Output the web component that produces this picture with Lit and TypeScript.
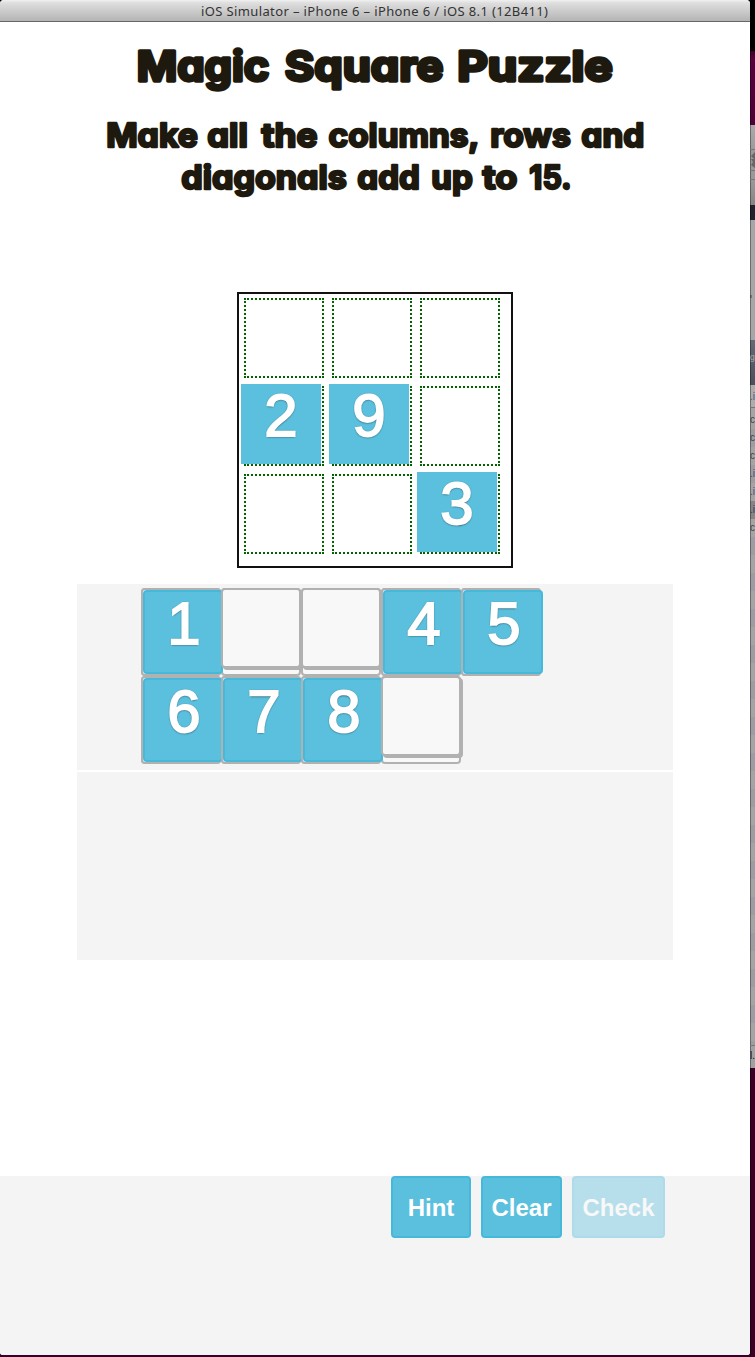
import { LitElement, html, svg, css, nothing } from "lit";
import { customElement, property } from "lit/decorators.js";

type Word = [text: string, x: number, width: number];
interface Line { y: number; cls: string; words: Word[]; }

const HEADINGS: Line[] = [
  { y: 59, cls: "title", words: [["Magic", 136.7, 132.6], ["Square", 284.7, 158.6], ["Puzzle", 457.2, 155.4]] },
  { y: 124.8, cls: "sub", words: [["Make", 106.2, 91.6], ["all", 207.3, 40.5], ["the", 261.5, 56], ["columns,", 328.5, 151], ["rows", 490.3, 80.5], ["and", 581.3, 63]] },
  { y: 166.8, cls: "sub", words: [["diagonals", 181.3, 165.5], ["add", 357.3, 62.5], ["up", 431.3, 41.5], ["to", 482.5, 35], ["15.", 529.3, 42]] },
];

const BOARD = ["", "", "", "2", "9", "", "", "", "3"];
const TRAY = ["1", "", "", "4", "5", "6", "7", "8", ""];

@customElement("number-tile")
class NumberTile extends LitElement {
  @property() value = "";
  static styles = css`
    :host {
      display: block;
      box-sizing: border-box;
      flex: none;
      background: #5bc0de;
      color: #fff;
      text-align: center;
      font: 60px/64px "Liberation Sans", Arial, sans-serif;
      -webkit-text-stroke: 1.8px #fff;
      text-shadow: 0 0 2px rgba(0, 0, 0, 0.7), 0 1px 2px rgba(0, 0, 0, 0.6);
    }
  `;
  render() {
    return html`${this.value}`;
  }
}

@customElement("desktop-edge")
class DesktopEdge extends LitElement {
  static styles = css`
    :host {
      display: flex;
      flex-direction: column;
      width: 5px;
      height: 1357px;
      overflow: hidden;
      background: #3b0028;
      box-shadow: inset 1px 0 0 rgba(0, 0, 0, 0.4);
      font: 10px/18px "Liberation Sans", Arial, sans-serif;
      color: #444;
    }
    div { flex: none; overflow: hidden; box-sizing: border-box; box-shadow: inset 1px 0 0 rgba(0, 0, 0, 0.35); }
    .sky { height: 51px; background: #000; }
    .wall { height: 74px; background: linear-gradient(#3f002c, #57013e 8px, #4d0138); }
    .bar { height: 24px; background: linear-gradient(#aaa, #9b9b9b); }
    .tools { height: 21px; background: #999; border-top: 1px solid #777; }
    .tools svg { display: block; }
    .rule { height: 9px; background: #999; border-top: 1px solid #777; }
    .low { height: 26px; background: linear-gradient(#999, #858585); border-top: 1px solid #777; }
    .dark { height: 15px; background: #20222f; }
    .pane { height: 120px; background: #a5a7a6; padding-top: 75px; }
    .speck { height: 3px; width: 2px; background: #777; }
    .slate { height: 45px; background: linear-gradient(#656a77, #4b4f5c); color: #aaa; font-size: 8.5px; line-height: 34px; }
    .head { height: 22px; background: #abadad; color: #345c78; font-size: 10px; line-height: 24px; }
    .row { height: 18px; background: #a3a5a5; }
    .row:nth-child(even) { background: #9b9da2; }
    .row.selected { background: #858585; color: #223c60; }
    .blue { color: #375270; }
    .first { height: 22px; border-top: 1px solid #777; padding-top: 3px; }
    .tail { height: 4px; }
    .status { height: 23px; background: #a0a2a2; border-top: 1px solid #777; color: #111; line-height: 20px; }
  `;
  render() {
    const letters = ["c", "c", "c", ".i", ".i", ".i", "c"];
    return html`
      <div class="sky"></div>
      <div class="wall"></div>
      <div class="bar"></div>
      <div class="tools"><svg width="5" height="20"><path d="M5 2L1 6l4 4zM1 9l2 3-2 3 4 3V9z" fill="#666" /></svg></div>
      <div class="rule"></div>
      <div class="low"></div>
      <div class="dark"></div>
      <div class="pane"><div class="speck"></div></div>
      <div class="slate">g</div>
      <div class="head">.i</div>
      ${Array.from({ length: 35 }, (_, i) => html`<div
        class="row ${i === 0 ? "first" : ""} ${i === 5 ? "selected" : ""} ${i > 2 && i < 6 ? "blue" : ""}"
      >${letters[i] ?? nothing}</div>`)}
      <div class="row tail"></div>
      <div class="status">l.</div>
    `;
  }
}

@customElement("app-root")
class AppRoot extends LitElement {
  static styles = css`
    :host {
      display: flex;
      width: 755px;
      height: 1357px;
      overflow: hidden;
      background: linear-gradient(#000 0 51px, #3b0028 51px);
    }
    .window {
      width: 750px;
      height: 1355px;
      flex: none;
      display: flex;
      flex-direction: column;
      align-items: center;
      background: #fff;
      border-radius: 4px 4px 3px 3px;
      overflow: hidden;
    }
    .bar {
      flex: none;
      box-sizing: border-box;
      width: 750px;
      height: 22px;
      border-bottom: 1px solid #676767;
      background: linear-gradient(#f0f0f0, #dedede 3px, #b4b4b4);
    }
    .bar svg, .heading { display: block; }
    .bar text { font: 13px "Noto Sans", sans-serif; fill: #333; }
    .heading { flex: none; height: 270px; width: 750px; }
    .heading text {
      font-family: Inter, sans-serif;
      font-weight: 650;
      font-feature-settings: "cv11" 1;
      fill: #1e190e;
      stroke: #1e190e;
      stroke-linejoin: round;
    }
    .heading .title { font-size: 41px; stroke-width: 3.3px; }
    .heading .sub { font-size: 33px; stroke-width: 2.4px; }
    .board {
      flex: none;
      box-sizing: border-box;
      width: 276px;
      height: 276px;
      border: 2px solid #111;
      padding: 4px 0 0 5px;
      display: grid;
      grid-template: repeat(3, 80px) / repeat(3, 80px);
      gap: 8px;
    }
    .cell { box-sizing: border-box; width: 80px; height: 80px; border: 2px dotted #006400; }
    .cell number-tile { width: 80px; height: 80px; margin: -4px 0 0 -5px; }
    .tray {
      flex: none;
      box-sizing: border-box;
      width: 596px;
      height: 186px;
      margin-top: 16px;
      padding: 4px 0 0 64px;
      background: #f4f4f4;
      display: grid;
    }
    .layer { grid-area: 1 / 1; display: grid; grid-template: repeat(2, 88px) / repeat(5, 80px); }
    .slot, .holder, .empty {
      box-sizing: border-box;
      width: 80px;
      height: 88px;
      border: 2px solid #b1b1b1;
      border-radius: 4px;
      background: #f8f8f8;
    }
    .empty { height: 80px; box-shadow: 2px 2px 0 #b1b1b1; }
    .holder number-tile { width: 80px; height: 84px; border: 2px solid #46b8da; border-radius: 4px; padding: 0 0 0 2px; }
    .spare { flex: none; width: 596px; height: 188px; margin-top: 2px; background: #f4f4f4; }
    .footer {
      box-sizing: border-box;
      width: 750px;
      height: 179px;
      margin-top: auto;
      padding-right: 85px;
      background: #f4f4f4;
      display: flex;
      justify-content: flex-end;
      align-items: flex-start;
      gap: 10px;
    }
    button {
      box-sizing: border-box;
      height: 62px;
      padding: 2px 0 0;
      border: 2px solid #46b8da;
      border-radius: 4px;
      background: #5bc0de;
      color: #fff;
      font: bold 24px "Liberation Sans", Arial, sans-serif;
    }
    .hint { width: 80px; }
    .clear { width: 81px; }
    .check { width: 93px; }
    button:disabled { opacity: 0.4; }
  `;

  render() {
    return html`
      <div class="window">
        <div class="bar">
          <svg width="750" height="21">
            <text x="201" y="16" textLength="347" lengthAdjust="spacing">iOS Simulator – iPhone 6 – iPhone 6 / iOS 8.1 (12B411)</text>
          </svg>
        </div>
        <svg class="heading" width="750" height="270">
          ${HEADINGS.map((line) => svg`<g>${line.words.map(([word, x, width]) => svg`<text
            class=${line.cls} x=${x} y=${line.y} textLength=${width} lengthAdjust="spacingAndGlyphs">${word}</text>`)}</g>`)}
        </svg>
        <div class="board">
          ${BOARD.map((v) => html`<div class="cell">${v ? html`<number-tile value=${v}></number-tile>` : nothing}</div>`)}
        </div>
        <div class="tray">
          <div class="layer">${TRAY.map(() => html`<div class="slot"></div>`)}</div>
          <div class="layer">
            ${TRAY.map((v) => v
              ? html`<div class="holder"><number-tile value=${v}></number-tile></div>`
              : html`<div class="empty"></div>`)}
          </div>
        </div>
        <div class="spare"></div>
        <div class="footer">
          <button class="hint">Hint</button>
          <button class="clear">Clear</button>
          <button class="check" disabled>Check</button>
        </div>
      </div>
      <desktop-edge></desktop-edge>
    `;
  }
}
